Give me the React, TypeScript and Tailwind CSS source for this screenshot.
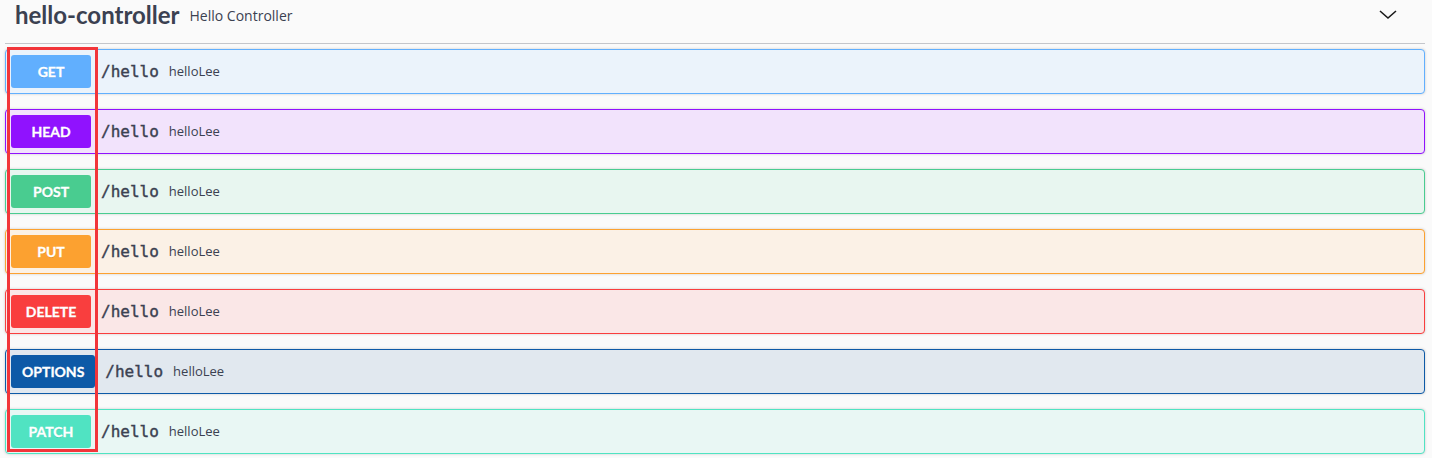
import React from "react";

type Op = {
  method: string;
  badge: string;
  border: string;
  bg: string;
};

const ops: Op[] = [
  { method: "GET", badge: "bg-[#61affe]", border: "border-[#61affe]", bg: "bg-[#ebf3fb]" },
  { method: "HEAD", badge: "bg-[#9012fe]", border: "border-[#9012fe]", bg: "bg-[#f2e3fc]" },
  { method: "POST", badge: "bg-[#49cc90]", border: "border-[#49cc90]", bg: "bg-[#e8f6f0]" },
  { method: "PUT", badge: "bg-[#fca130]", border: "border-[#fca130]", bg: "bg-[#fbf1e6]" },
  { method: "DELETE", badge: "bg-[#f93e3e]", border: "border-[#f93e3e]", bg: "bg-[#fae7e7]" },
  { method: "OPTIONS", badge: "bg-[#0d5aa7]", border: "border-[#0d5aa7]", bg: "bg-[#e1e8ef]" },
  { method: "PATCH", badge: "bg-[#50e3c2]", border: "border-[#50e3c2]", bg: "bg-[#e9f7f4]" },
];

function OpBlock({ op }: { op: Op }) {
  return (
    <div
      className={`mb-[15px] flex h-[45px] items-center rounded-[4px] border p-[5px] shadow-[0_0_3px_rgba(0,0,0,0.19)] ${op.border} ${op.bg}`}
    >
      <span
        className={`flex h-[33px] min-w-[80px] items-center justify-center rounded-[3px] px-[11px] font-['Lato',sans-serif] text-[14px] font-bold text-white [-webkit-text-stroke:0.3px_white] [text-shadow:0_1px_0_rgba(0,0,0,0.1)] ${op.badge}`}
      >
        {op.method}
      </span>
      <span className="px-[10px] font-['DejaVu_Sans_Mono',monospace] text-[16px] font-normal text-[#3b4151] [-webkit-text-stroke:0.4px_#3b4151]">
        /hello
      </span>
      <span className="font-['Open_Sans',sans-serif] text-[13px] text-[#3b4151]">helloLee</span>
    </div>
  );
}

export default function App() {
  return (
    <div className="relative h-[458px] w-[1432px] overflow-hidden bg-[#fafafa] pl-[5px] pr-[7px]">
      {/* Tag header */}
      <div className="mb-[5px] flex h-[44px] items-center border-b border-[#c4c6cb] pb-[13px] pl-[10px] pr-[27px]">
        <span className="font-['Lato',sans-serif] text-[24px] font-bold text-[#3b4151]">hello-controller</span>
        <span className="ml-[10px] mt-[1px] flex-1 font-['Open_Sans',sans-serif] text-[14px] text-[#3b4151]">
          Hello Controller
        </span>
        <svg width="20" height="20" viewBox="0 0 20 20">
          <path d="M2 6 L10 13 L18 6" fill="none" stroke="#1a1a1a" strokeWidth="1.6" />
        </svg>
      </div>

      {/* Operations */}
      {ops.map((op) => (
        <OpBlock key={op.method} op={op} />
      ))}

      {/* Annotation box */}
      <div className="absolute left-[7px] top-[47px] h-[405px] w-[91px] border-[3px] border-[#f2353a]" />
    </div>
  );
}
